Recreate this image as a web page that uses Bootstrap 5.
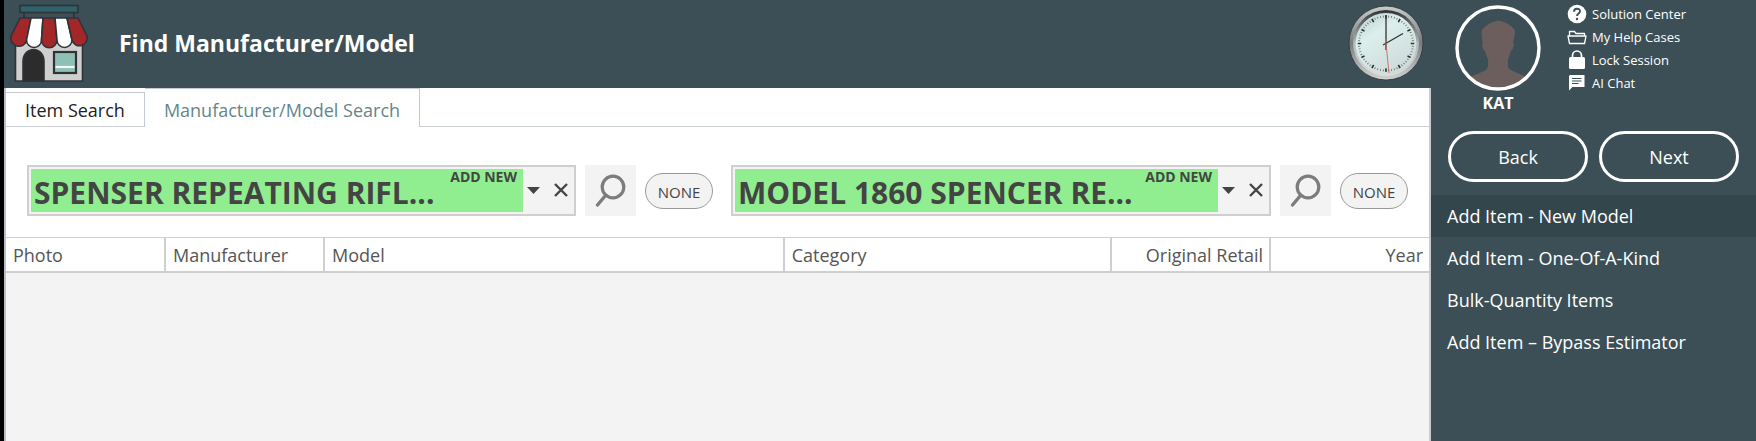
<!DOCTYPE html>
<html lang="en">
<head>
<meta charset="utf-8">
<meta name="viewport" content="width=device-width, initial-scale=1">
<title>Find Manufacturer/Model</title>
<link href="https://cdn.jsdelivr.net/npm/bootstrap@5.3.0/dist/css/bootstrap.min.css" rel="stylesheet">
<style>
  :root { --slate: #3c4f56; --slate-dark: #33464c; --panel: #f3f3f3; --rule: #cfcfcf; --ink: #444; }
  body { font-family: "Open Sans", "Noto Sans", sans-serif; background: var(--slate); color: var(--ink); }
  .shell { border-left: 4px solid #000; }
  .top-bar { height: 88px; padding: 0 6px 2px; background: var(--slate); color: #fff; }
  .store-icon { width: 80px; height: 80px; }
  .page-title { font-size: 23px; line-height: 32px; font-weight: 700; margin-left: 29px; }
  .clock-icon { width: 78px; height: 78px; }
  .main-pane { background: var(--panel); border-left: 2px solid #b9bfc4; border-right: 2px solid #c5cbce; }

  .search-tabs { height: 39px; background: #fff; border-bottom: 1px solid #ccd2d8; }
  .search-tabs .nav-link { font-size: 18px; line-height: 24px; border: 1px solid #c3c9d0; border-left: 0; border-bottom: 0; border-radius: 0; color: #222; padding: 0 19px; height: 35px; margin: 0; }
  .search-tabs .nav-link.active { height: 39px; color: #64868a; background: #fff; padding-top: 3px; }

  .filters { display: grid; grid-template-columns: 686fr 677fr; gap: 18px; padding: 38px 21px 21px; background: #fff; }
  .combo { height: 51px; border: 2px solid var(--rule); padding: 2px; background: var(--panel); min-width: 0; }
  .combo-text { width: 100%; height: 100%; border: 0; background: #90ee90; color: var(--ink); font-size: 30px; font-weight: 700; padding: 4px 3px 0; }
  .combo-tag { top: 0; right: 6px; font-size: 14px; line-height: 16px; font-weight: 700; }
  .combo-btn { border: 0; background: none; padding: 0 0 4px; color: var(--ink); width: 20px; flex: none; }
  .combo-clear { width: 29px; padding-left: 7px; }
  .search-btn { width: 51px; height: 51px; border: 0; border-radius: 0; padding: 0; background: var(--panel); margin-left: 9px; flex: none; }
  .none-btn { width: 68px; height: 36px; border: 1px solid #999; border-radius: 18px; background: var(--panel); color: var(--ink); font-size: 15px; line-height: 20px; padding: 2px 0 0; margin-left: 9px; flex: none; }

  .results { table-layout: fixed; background: #fff; border-top: 1px solid var(--rule); border-bottom: 2px solid var(--rule); margin: 0; }
  .results th { font-size: 18px; line-height: 24px; font-weight: 400; color: #555; height: 34px; padding: 1px 6px 0 7px; border-right: 2px solid var(--rule); }
  .results th:last-child { border-right: 0; }
  .w-narrow { width: 159px; }
  .w-category { width: 23%; }

  .side { width: 325px; flex: none; color: #fff; }
  .side-top { height: 131px; padding-left: 24px; padding-top: 5px; }
  .avatar { width: 86px; height: 86px; }
  .user-name { font-size: 16px; line-height: 24px; font-weight: 700; }
  .help-links { margin-left: 26px; margin-top: -2px; gap: 1px; }
  .help-links a { font-size: 13px; line-height: 22px; height: 22px; color: #fff; gap: 5px; }
  .help-links svg { width: 20px; height: 20px; flex: none; }
  .side-actions { gap: 11px; padding: 0 17px 13px; }
  .pill-btn { height: 51px; border: 3px solid #fff; border-radius: 26px; color: #fff; font-size: 18px; line-height: 24px; padding: 0; background: none; }
  .side-menu a { font-size: 18px; line-height: 24px; padding: 9px 16px; color: #fff; }
  .side-menu a.current { background: var(--slate-dark); }
</style>
</head>
<body>
<div class="shell d-flex min-vh-100">
  <main class="flex-grow-1 d-flex flex-column">
    <header class="top-bar d-flex align-items-center">
      <svg class="store-icon" viewBox="0 0 80 80" aria-hidden="true">
        <g stroke="#2f3338" stroke-width="1.6">
          <path d="M14 8v8M64 8v8" />
          <rect x="10" y="2.500" width="58" height="7" fill="#2f626b" />
          <path d="M5.500 38h67v40h-67z" fill="#cfcfcf" />
          <path d="M13 78V58a10.500 11.500 0 0 1 21 0v20z" fill="#2c2c2c" />
          <rect x="44" y="49" width="22" height="21" fill="#8fc0b5" stroke-width="2.200" />
          <path d="M10 15h11l-4 22a7.500 7.500 0 0 1-16-4z" fill="#a32629" />
          <path d="M21 15h12l-1.500 22a7.500 7.500 0 0 1-15 0z" fill="#fff" />
          <path d="M33 15h12l2 22a7.500 7.500 0 0 1-15.500 0z" fill="#a32629" />
          <path d="M45 15h12l5 22a7.500 7.500 0 0 1-15 0z" fill="#fff" />
          <path d="M57 15h11l9 18a7.500 7.500 0 0 1-15 4z" fill="#a32629" />
        </g>
        <path d="M45.500 64h19" stroke="#f2f8f6" stroke-width="2.200" />
      </svg>
      <h1 class="page-title mb-0 flex-grow-1">Find Manufacturer/Model</h1>
      <svg class="clock-icon" viewBox="0 0 78 78" aria-hidden="true">
        <defs>
          <linearGradient id="rim" x1="0" y1="0" x2="0" y2="1"><stop offset="0" stop-color="#c9cccc" /><stop offset=".5" stop-color="#777c7e" /><stop offset="1" stop-color="#d2d4d4" /></linearGradient>
          <linearGradient id="bezel" x1="0" y1="0" x2="0" y2="1"><stop offset="0" stop-color="#2d3335" /><stop offset=".5" stop-color="#b5b9ba" /><stop offset="1" stop-color="#dcdede" /></linearGradient>
          <linearGradient id="face" x1=".2" y1="0" x2=".8" y2="1"><stop offset="0" stop-color="#bfd3d1" /><stop offset=".3" stop-color="#dcefec" /><stop offset="1" stop-color="#ccd9d7" /></linearGradient>
        </defs>
        <circle cx="39" cy="39" r="37" fill="url(#rim)" stroke="#2b3538" stroke-width=".8" />
        <circle cx="39" cy="39" r="33" fill="url(#bezel)" />
        <circle cx="39" cy="39.500" r="30.500" fill="url(#face)" />
        <circle cx="39" cy="39.500" r="27" fill="none" stroke="#56615f" stroke-width="2" pathLength="120" stroke-dasharray=".5 1.500" stroke-dashoffset=".25" />
        <circle cx="39" cy="39.500" r="26.500" fill="none" stroke="#2c3332" stroke-width="3.500" pathLength="120" stroke-dasharray="1.200 8.800" stroke-dashoffset=".6" />
        <path d="M36 41l20-11.500M39 46V11" stroke="#333" stroke-width="1.300" fill="none" />
        <path d="M38.500 35L42 69" stroke="#c56a68" stroke-width=".9" />
      </svg>
    </header>

    <div class="main-pane flex-grow-1">
      <nav class="search-tabs nav d-flex align-items-end" aria-label="Search type">
        <a class="nav-link d-flex align-items-center" href="#">Item Search</a>
        <a class="nav-link active d-flex align-items-center" aria-current="page" href="#">Manufacturer/Model Search</a>
      </nav>

      <form class="filters">
        <div class="d-flex align-items-center">
          <div class="combo d-flex flex-grow-1">
            <div class="position-relative flex-grow-1">
              <input class="combo-text d-block" type="text" aria-label="Manufacturer" value="SPENSER REPEATING RIFL...">
              <span class="combo-tag position-absolute">ADD NEW</span>
            </div>
            <button class="combo-btn" type="button" aria-label="Open list"><svg width="13" height="7" viewBox="0 0 13 7"><path d="M0 0h13L6.500 7z" fill="#444" /></svg></button>
            <button class="combo-btn combo-clear" type="button" aria-label="Clear"><svg width="14" height="14" viewBox="0 0 14 14"><path d="M1 1l12 12M13 1L1 13" stroke="#444" stroke-width="2.400" /></svg></button>
          </div>
          <button class="search-btn btn" type="button" aria-label="Search manufacturers"><svg width="51" height="51" viewBox="0 0 51 51" fill="none" stroke="#7c7c7c"><circle cx="28" cy="22" r="10.800" stroke-width="3.200" /><path d="M20.500 30.500l-8 9.500" stroke-width="3.400" stroke-linecap="round" /></svg></button>
          <button class="none-btn btn" type="button">NONE</button>
        </div>
        <div class="d-flex align-items-center">
          <div class="combo d-flex flex-grow-1">
            <div class="position-relative flex-grow-1">
              <input class="combo-text d-block" type="text" aria-label="Model" value="MODEL 1860 SPENCER RE...">
              <span class="combo-tag position-absolute">ADD NEW</span>
            </div>
            <button class="combo-btn" type="button" aria-label="Open list"><svg width="13" height="7" viewBox="0 0 13 7"><path d="M0 0h13L6.500 7z" fill="#444" /></svg></button>
            <button class="combo-btn combo-clear" type="button" aria-label="Clear"><svg width="14" height="14" viewBox="0 0 14 14"><path d="M1 1l12 12M13 1L1 13" stroke="#444" stroke-width="2.400" /></svg></button>
          </div>
          <button class="search-btn btn" type="button" aria-label="Search models"><svg width="51" height="51" viewBox="0 0 51 51" fill="none" stroke="#7c7c7c"><circle cx="28" cy="22" r="10.800" stroke-width="3.200" /><path d="M20.500 30.500l-8 9.500" stroke-width="3.400" stroke-linecap="round" /></svg></button>
          <button class="none-btn btn" type="button">NONE</button>
        </div>
      </form>

      <table class="results w-100">
        <thead>
          <tr>
            <th class="w-narrow" scope="col">Photo</th>
            <th class="w-narrow" scope="col">Manufacturer</th>
            <th scope="col">Model</th>
            <th class="w-category" scope="col">Category</th>
            <th class="w-narrow text-end" scope="col">Original Retail</th>
            <th class="w-narrow text-end" scope="col">Year</th>
          </tr>
        </thead>
      </table>
    </div>
  </main>

  <aside class="side">
    <div class="side-top d-flex align-items-start">
      <div class="text-center">
        <svg class="avatar d-block" viewBox="0 0 86 86" aria-hidden="true">
          <defs><clipPath id="ring"><circle cx="43" cy="43" r="40" /></clipPath></defs>
          <path clip-path="url(#ring)" fill="#6c5e5c" d="M12 74c6-4 14-6 19-9 3-3 2-7 2-11-2-3-2-5-3-8-2 0-4-7-2-8-1-4-2-9-1-13 3-4 9-8 16-9.500 7 1 14 5 17 10 0 4-1 8-2 12 2 1 0 8-2 8-1 4-2 6-3 9 0 4-1 8 2 10 5 3 13 5 20 9.500v12H12z" />
          <circle cx="43" cy="43" r="41" fill="none" stroke="#fff" stroke-width="3.400" />
        </svg>
        <div class="user-name">KAT</div>
      </div>
      <nav class="help-links d-flex flex-column" aria-label="Help">
        <a class="d-flex align-items-center text-decoration-none" href="#"><svg viewBox="0 0 20 20"><circle cx="10" cy="10" r="9.300" fill="#fff" /><path d="M7 7.700c0-4 6-3.800 6-.4 0 2-3 2.400-3 4.700" fill="none" stroke="#3c4f56" stroke-width="1.900" /><circle cx="10" cy="15" r="1.200" fill="#3c4f56" /></svg>Solution Center</a>
        <a class="d-flex align-items-center text-decoration-none" href="#"><svg viewBox="0 0 20 20" fill="none" stroke="#fff" stroke-width="1.300"><path d="M2.500 9V4.500h5l1.500 2h8.500V9M1 9h18l-1.500 7.500h-15z" stroke-linejoin="round" /></svg>My Help Cases</a>
        <a class="d-flex align-items-center text-decoration-none" href="#"><svg viewBox="0 0 20 20"><rect x="2" y="7" width="16" height="12" rx="1.500" fill="#fff" /><path d="M5.500 8V5.500a4.500 4.500 0 0 1 9 0V8" fill="none" stroke="#fff" stroke-width="1.700" /></svg>Lock Session</a>
        <a class="d-flex align-items-center text-decoration-none" href="#"><svg viewBox="0 0 20 20"><path d="M3 2h14.500v12H5.500L2 17.500V3z" fill="#fff" /><path d="M5 5.500h9.500M5 8h9.500M5 10.500h6.500" stroke="#3c4f56" stroke-width="1.200" /></svg>AI Chat</a>
      </nav>
    </div>
    <div class="side-actions d-flex">
      <button class="pill-btn btn flex-fill w-50" type="button">Back</button>
      <button class="pill-btn btn flex-fill w-50" type="button">Next</button>
    </div>
    <nav class="side-menu d-flex flex-column" aria-label="Item actions">
      <a class="current text-decoration-none" href="#">Add Item - New Model</a>
      <a class="text-decoration-none" href="#">Add Item - One-Of-A-Kind</a>
      <a class="text-decoration-none" href="#">Bulk-Quantity Items</a>
      <a class="text-decoration-none" href="#">Add Item – Bypass Estimator</a>
    </nav>
  </aside>
</div>
<script src="https://cdn.jsdelivr.net/npm/bootstrap@5.3.0/dist/js/bootstrap.bundle.min.js"></script>
</body>
</html>
